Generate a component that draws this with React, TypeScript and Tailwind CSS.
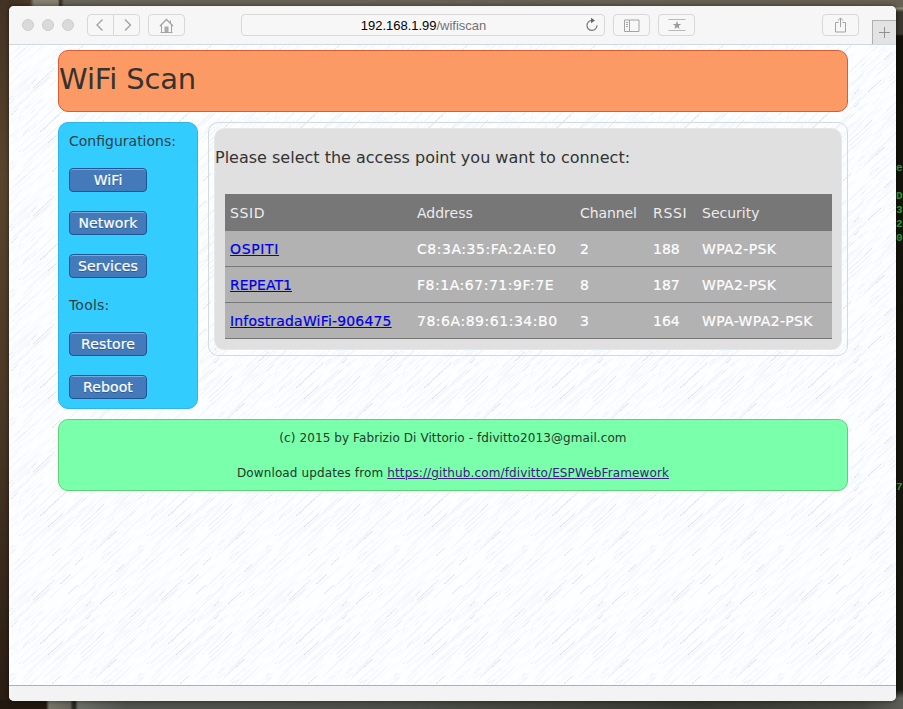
import React from "react";

const networks = [
  { ssid: "OSPITI", spacing: "tracking-[0.65px]", address: "C8:3A:35:FA:2A:E0", channel: 2, rssi: 188, security: "WPA2-PSK" },
  { ssid: "REPEAT1", spacing: "tracking-[0.02px]", address: "F8:1A:67:71:9F:7E", channel: 8, rssi: 187, security: "WPA2-PSK" },
  { ssid: "InfostradaWiFi-906475", spacing: "tracking-[0.18px]", address: "78:6A:89:61:34:B0", channel: 3, rssi: 164, security: "WPA-WPA2-PSK" },
];

type Stroke = { x: number; y: number; len: number; color: string; opacity: number; dash?: string };

function makeStrokes(): Stroke[] {
  let seed = 4711;
  const rnd = () => {
    seed = (seed * 1103515245 + 12345) % 2147483648;
    return seed / 2147483648;
  };
  const out: Stroke[] = [];
  for (let i = 0; i < 250; i++) {
    out.push({
      x: rnd() * 128,
      y: rnd() * 128,
      len: 5 + rnd() * 22,
      color: rnd() > 0.5 ? "#dfeaf7" : "#e4eafb",
      opacity: 0.3 + rnd() * 0.4,
    });
  }
  for (let i = 0; i < 26; i++) {
    out.push({ x: rnd() * 128, y: rnd() * 128, len: 2 + rnd() * 5, color: "#b4c6e2", opacity: 0.55, dash: "1.5 1" });
  }
  const marks: [number, number, number][] = [
    [24, 43, 22], [51, 27, 11], [91, 47, 13], [59, 37, 10], [77, 49, 5], [122, 60, 10],
    [31, 87, 28], [39, 98, 15], [99, 110, 9], [43, 127, 9], [2, 70, 7], [78, 62, 4], [107, 15, 8], [66, 8, 9],
  ];
  marks.forEach(([x, y, len]) => out.push({ x, y, len, color: "#b3c6ec", opacity: 0.75, dash: "3 0.8" }));
  return out;
}

const strokes = makeStrokes();

function Texture() {
  return (
    <svg className="absolute inset-0 h-full w-full" aria-hidden="true">
      <defs>
        <pattern id="rain" width="128" height="128" patternUnits="userSpaceOnUse">
          <rect width="128" height="128" fill="#fdfeff" />
          {strokes.map((s, i) =>
            [0, -128].map((dx) =>
              [0, 128].map((dy) => (
                <line
                  key={`${i}${dx}${dy}`}
                  x1={s.x + dx}
                  y1={s.y + dy}
                  x2={s.x + dx + s.len}
                  y2={s.y + dy - s.len * 0.92}
                  stroke={s.color}
                  strokeOpacity={s.opacity}
                  strokeWidth="0.8"
                  strokeDasharray={s.dash}
                />
              )),
            ),
          )}
        </pattern>
      </defs>
      <rect width="100%" height="100%" fill="url(#rain)" />
    </svg>
  );
}

const toolBtn = "flex h-[22px] items-center justify-center rounded-[4px] border border-[#d8d8d8] bg-[#f7f7f7]";

function Toolbar() {
  return (
    <div className="flex h-[39px] shrink-0 border-b border-[#d3d8dd] bg-[#f6f6f6] pt-2 pl-[13px]">
      <div className="flex h-[22px] w-[65px] items-center gap-2">
        <span className="h-3 w-3 rounded-full border border-[#cdcdcd] bg-[#dadada]" />
        <span className="h-3 w-3 rounded-full border border-[#cdcdcd] bg-[#dadada]" />
        <span className="h-3 w-3 rounded-full border border-[#cdcdcd] bg-[#dadada]" />
      </div>
      <div className={`${toolBtn} w-[53px]`}>
        <svg width="51" height="20" viewBox="0 0 51 20" fill="none" stroke="#a3a3a3" strokeWidth="1.4">
          <path d="M14.500 4.500 9 10l5.500 5.500M37 4.500 42.500 10 37 15.500" />
          <path d="M25.500 0v20" stroke="#d8d8d8" strokeWidth="1" />
        </svg>
      </div>
      <div className={`${toolBtn} ml-2 w-[37px]`}>
        <svg width="15" height="15" viewBox="0 0 15 15" fill="none" stroke="#a3a3a3">
          <path d="M1 8 7.500 1.500 14 8" strokeWidth="1.3" />
          <path d="M2.500 7v7.500M12.500 7v7.500M1.500 14.500h12M11.500 5V2.500" />
          <path d="M5.500 14V8.500h4V14z" fill="#ababab" stroke="none" />
        </svg>
      </div>
      <div className={`${toolBtn} relative ml-[56px] w-[364px] pt-[2px] pl-px font-['Liberation_Sans',Arial,sans-serif] text-[13px] tracking-[-0.02px] text-[#727272]`}>
        <span className="text-black">192.168.1.99</span>/wifiscan
        <svg className="absolute top-[2px] right-[5px]" width="14" height="15" viewBox="0 0 14 15" fill="none" stroke="#777" strokeWidth="1.2">
          <path d="M8.500 3.400H7A5 5 0 1 0 12 8.300" />
          <path d="m6 .8 4 2.700-4 2.700z" fill="#666" stroke="none" />
        </svg>
      </div>
      <div className={`${toolBtn} ml-2 w-[37px]`}>
        <svg width="16" height="13" viewBox="0 0 16 13" fill="none" stroke="#a3a3a3">
          <path d="M.5 1h14.500v11.500H.5zM5.500 1v11.500M2 3.500h2M2 5.500h2M2 7.500h2" />
        </svg>
      </div>
      <div className={`${toolBtn} ml-2 w-[37px]`}>
        <svg width="18" height="13" viewBox="0 0 18 13">
          <path d="M.5.5h17M.5 11.500h17" stroke="#b8b8b8" />
          <path d="m9 1.900 1.100 3 3.100.1-2.500 1.900.9 3.100L9 8.200 6.400 10l.9-3.100L4.800 5l3.100-.1z" fill="#9c9c9c" />
        </svg>
      </div>
      <div className={`${toolBtn} ml-[127px] w-[37px]`}>
        <svg width="13" height="16" viewBox="0 0 13 16" fill="none" stroke="#a3a3a3">
          <path d="M4.500 5.500h-3v9.500h10V5.500h-3M6.500 10V1M3.800 3.700 6.500 1l2.700 2.700" />
        </svg>
      </div>
      <div className="mt-[6px] ml-[13px] flex h-6 w-[24px] items-center justify-center border-t border-l border-[#b0b0b0] bg-[#e3e3e3]">
        <svg width="11" height="11" viewBox="0 0 11 11" stroke="#909090">
          <path d="M5.500 0v11M0 5.500h11" />
        </svg>
      </div>
    </div>
  );
}

function NavButton({ label }: { label: string }) {
  return (
    <button className="flex h-6 w-[78px] items-center justify-center rounded-[4px] border border-[#1f5590] bg-[#447ab9] text-[14px] leading-none tracking-[0.1px] text-white shadow-[inset_0_1px_0_#7fa9da] [text-shadow:0_1px_0_#2c5b92] [-webkit-text-stroke:0.2px_white]">
      {label}
    </button>
  );
}

function Sidebar() {
  return (
    <nav className="h-[287px] w-[140px] rounded-[10px] border border-[#2fb4e4] bg-[#33ccff] pt-[9px] pl-[10px] text-[14px] text-[#2c4047]">
      <p className="h-9 leading-[19px]">Configurations:</p>
      <div className="flex flex-col gap-[19px]">
        <NavButton label="WiFi" />
        <NavButton label="Network" />
        <NavButton label="Services" />
      </div>
      <p className="mt-[18px] h-9 leading-[19px] tracking-[0.2px]">Tools:</p>
      <div className="flex flex-col gap-[19px]">
        <NavButton label="Restore" />
        <NavButton label="Reboot" />
      </div>
    </nav>
  );
}

const columns = "grid grid-cols-[187px_163px_73px_49px_1fr] items-center pt-[2px] pl-[5px]";

function NetworkTable() {
  return (
    <div className="ml-[10px] w-[607px] text-[14px] text-white">
      <div className={`${columns} h-[37px] bg-[#777] text-[#ececec]`}>
        <span className="tracking-[0.6px]">SSID</span>
        <span>Address</span>
        <span className="-tracking-[0.1px]">Channel</span>
        <span className="tracking-[0.7px]">RSSI</span>
        <span>Security</span>
      </div>
      {networks.map((n) => (
        <div key={n.ssid} className={`${columns} h-9 border-b border-[#777] bg-[#b2b2b2] [-webkit-text-stroke:0.2px]`}>
          <a href="#" className={`text-[#0000e0] underline ${n.spacing}`}>{n.ssid}</a>
          <span className="tracking-[0.53px]">{n.address}</span>
          <span>{n.channel}</span>
          <span>{n.rssi}</span>
          <span className="tracking-[0.36px]">{n.security}</span>
        </div>
      ))}
    </div>
  );
}

function PageBody() {
  return (
    <div className="relative flex-1 overflow-hidden">
      <Texture />
      <div className="relative ml-[49px] w-[790px] pt-[5px]">
        <header className="h-[62px] rounded-[10px] border border-[#d85c35] bg-[#fc9a66] pt-[8px] text-[29px] leading-[40px] -tracking-[0.16px] text-[#363230]">
          <h1>WiFi Scan</h1>
        </header>
        <div className="mt-[10px] flex items-start gap-[10px]">
          <Sidebar />
          <main className="h-[234px] w-[640px] rounded-[10px] border border-[#d5dae0] p-[5px]">
            <div className="h-full rounded-[10px] border border-[#e8e8e8] bg-[#e0e0e0]">
              <p className="h-[65px] pt-[18px] text-[16px] leading-[22px] text-[#333]">
                Please select the access point you want to connect:
              </p>
              <NetworkTable />
            </div>
          </main>
        </div>
        <footer className="mt-[10px] flex h-[72px] flex-col items-center gap-[17px] rounded-[10px] border border-[#62cf78] bg-[#7affaa] pt-[9px] text-[12px] leading-[18px] text-[#22382a]">
          <p className="tracking-[0.09px]">(c) 2015 by Fabrizio Di Vittorio - fdivitto2013@gmail.com</p>
          <p className="tracking-[0.125px]">
            Download updates from{" "}
            <a href="#" className="text-[#402080] underline">https://github.com/fdivitto/ESPWebFramework</a>
          </p>
        </footer>
      </div>
    </div>
  );
}

export default function App() {
  return (
    <div className="relative h-[709px] w-[903px] overflow-hidden bg-[linear-gradient(90deg,#3b2c1e_0,#4d3a27_30px,#85806f_34px,#85806f_58px,#2c2820_60px,#676458_64px,#676052_100%)] pt-[6px] pl-[9px] font-['DejaVu_Sans',Verdana,sans-serif]">
      <div className="absolute top-0 left-0 h-full w-[9px] bg-[linear-gradient(180deg,#433325,#59452d_25%,#493725_60%,#291c13)]" />
      <div className="absolute top-0 right-0 h-full w-[8px] bg-[linear-gradient(180deg,#666154_0,#666154_7px,#99917e_8px,#3a372e_12px,#3a372e_34px,#111109_36px,#17160f_540px,#1b1b13_690px,#60615b_698px)]" />
      <div className="absolute bottom-0 left-0 h-[9px] w-full bg-[linear-gradient(90deg,#22180f_0,#22180f_46px,#77756a_49px,#66645a_70px,#262620_73px,#262620_75px,#6a6c65_78px,#51534e_125px,#4c4e49_400px,#45463f_500px,#383932_700px,#45463f_860px,#5d5e58_903px)]" />
      <div className="absolute top-[161px] left-[896px] w-[10px] font-['Liberation_Mono',monospace] text-[11px] leading-[14px] font-bold text-[#329a35]">
        <p className="mb-[14px]">e</p>
        <p>D</p>
        <p>3</p>
        <p>2</p>
        <p>0</p>
        <p className="mt-[235px]">7</p>
      </div>
      <div className="relative flex h-[695px] w-[887px] flex-col overflow-hidden rounded-[5px] bg-white shadow-[0_0_5px_#0008]">
        <Toolbar />
        <PageBody />
        <div className="h-4 shrink-0 border-t border-[#aeb0b5] bg-[#f3f3f3]" />
      </div>
    </div>
  );
}
